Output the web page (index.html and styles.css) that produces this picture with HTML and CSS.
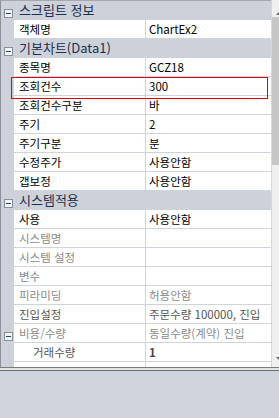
FILE: index.html
```html
<!DOCTYPE html>
<html lang="ko">
<head>
    <meta charset="UTF-8">
    <meta name="viewport" content="width=device-width, initial-scale=1.0">
    <title>속성</title>
    <link rel="stylesheet" href="styles.css">
</head>
<body>
<section id="container">
    <div class="top">
        <div class="props">
            <div class="row head"><span class="toggle"></span><span class="name">스크립트 정보</span></div>
            <div class="row"><span class="gut"></span><span class="name">객체명</span><span class="val">ChartEx2</span></div>
            <div class="row head"><span class="toggle"></span><span class="name">기본차트(Data1)</span></div>
            <div class="row"><span class="gut"></span><span class="name">종목명</span><span class="val">GCZ18</span></div>
            <div class="row"><span class="gut"></span><span class="name">조회건수</span><span class="val">300</span></div>
            <div class="row"><span class="gut"></span><span class="name">조회건수구분</span><span class="val">바</span></div>
            <div class="row"><span class="gut"></span><span class="name">주기</span><span class="val">2</span></div>
            <div class="row"><span class="gut"></span><span class="name">주기구분</span><span class="val">분</span></div>
            <div class="row"><span class="gut"></span><span class="name">수정주가</span><span class="val">사용안함</span></div>
            <div class="row"><span class="gut"></span><span class="name">갭보정</span><span class="val">사용안함</span></div>
            <div class="row head"><span class="toggle"></span><span class="name">시스템적용</span></div>
            <div class="row"><span class="gut"></span><span class="name">사용</span><span class="val">사용안함</span></div>
            <div class="row off"><span class="gut"></span><span class="name">시스템명</span><span class="val"></span></div>
            <div class="row off"><span class="gut"></span><span class="name">시스템 설정</span><span class="val"></span></div>
            <div class="row off"><span class="gut"></span><span class="name">변수</span><span class="val"></span></div>
            <div class="row off"><span class="gut"></span><span class="name">피라미딩</span><span class="val">허용안함</span></div>
            <div class="row"><span class="gut"></span><span class="name dim">진입설정</span><span class="val dim">주문수량 100000, 진입</span></div>
            <div class="row off"><span class="gut"><span class="toggle"></span></span><span class="name">비용/수량</span><span class="val">동일수량(계약) 진입</span></div>
            <div class="row"><span class="gut"></span><span class="name sub dim">거래수량</span><span class="val strong">1</span></div>
            <div class="row"><span class="gut"></span><span class="name"></span><span class="val"></span></div>
            <div class="mark"></div>
        </div>
        <div class="scroll">
            <span class="arrow up"></span>
            <span class="thumb"></span>
            <span class="arrow down"></span>
        </div>
    </div>
    <div class="split"></div>
    <div class="desc"></div>
</section>
</body>
</html>
```

FILE: styles.css
```css
body{
    margin: 0;
    background-color: #d0d4dc;
    font-family: "Noto Sans CJK KR", "Noto Sans", sans-serif;
    font-size: 11.5px;
    color: #000;
}
#container{
    width: 279px;
    height: 418px;
    overflow: hidden;
}
.top{
    display: flex;
    height: 367px;
    overflow: hidden;
    background-color: #fff;
}
.props{
    position: relative;
    width: 270px;
    border-top: 1px solid #a4a8b0;
    border-left: 1px solid #8c9098;
    background-color: #ccd1da;
    overflow: hidden;
}
.row{
    display: flex;
    height: 19px;
    line-height: 18px;
    white-space: nowrap;
}
.row .gut{
    position: relative;
    width: 13px;
    flex: none;
}
.row .name{
    width: 126px;
    flex: none;
    padding-left: 5px;
    background-color: #fff;
    border-bottom: 1px solid #cfd4dc;
    overflow: hidden;
}
.row .val{
    flex: 1;
    padding-left: 3px;
    background-color: #fff;
    border-left: 1px solid #cfd4dc;
    border-bottom: 1px solid #cfd4dc;
    overflow: hidden;
}
.row.head{
    font-size: 13px;
    color: #1f2f4c;
}
.row.head .name{
    width: auto;
    background-color: transparent;
    border-bottom: none;
    padding-left: 5px;
}
.toggle{
    display: block;
    box-sizing: border-box;
    width: 9px;
    height: 9px;
    margin: 8px 0 0 3px;
    border: 1px solid #8a8e96;
    background: linear-gradient(#244080, #244080) center / 5px 1px no-repeat, #f4f5f8;
    flex: none;
}
.row.head .toggle{
    margin-right: 1px;
}
.gut .toggle{
    margin-top: 8px;
}
.row.off .name,
.row.off .val{
    color: #8a8a8a;
}
.dim{
    color: #555;
}
.row .sub{
    padding-left: 19px;
    width: 112px;
}
.strong{
    font-weight: bold;
    color: #444;
}
.mark{
    position: absolute;
    left: 10px;
    top: 76px;
    width: 255px;
    height: 20px;
    border: 1px solid #e00000;
}
.scroll{
    position: relative;
    flex: 1;
    background-color: #efefef;
    border-left: 1px solid #d6d6d6;
}
.thumb{
    position: absolute;
    left: 0;
    right: 0;
    top: 17px;
    height: 148px;
    background-color: #c6c6c6;
}
.arrow{
    position: absolute;
    left: 4px;
    width: 0;
    height: 0;
    border-left: 4px solid transparent;
    border-right: 4px solid transparent;
}
.up{
    top: 11px;
    border-bottom: 4px solid #606060;
}
.down{
    top: 357px;
    border-top: 4px solid #606060;
}
.split{
    height: 2px;
    border-top: 1px solid #7c7c7c;
    border-bottom: 1px solid #6e6e6e;
    background-color: #e4e4e4;
}
.desc{
    height: 47px;
    background-color: #d0d4dc;
}
```
